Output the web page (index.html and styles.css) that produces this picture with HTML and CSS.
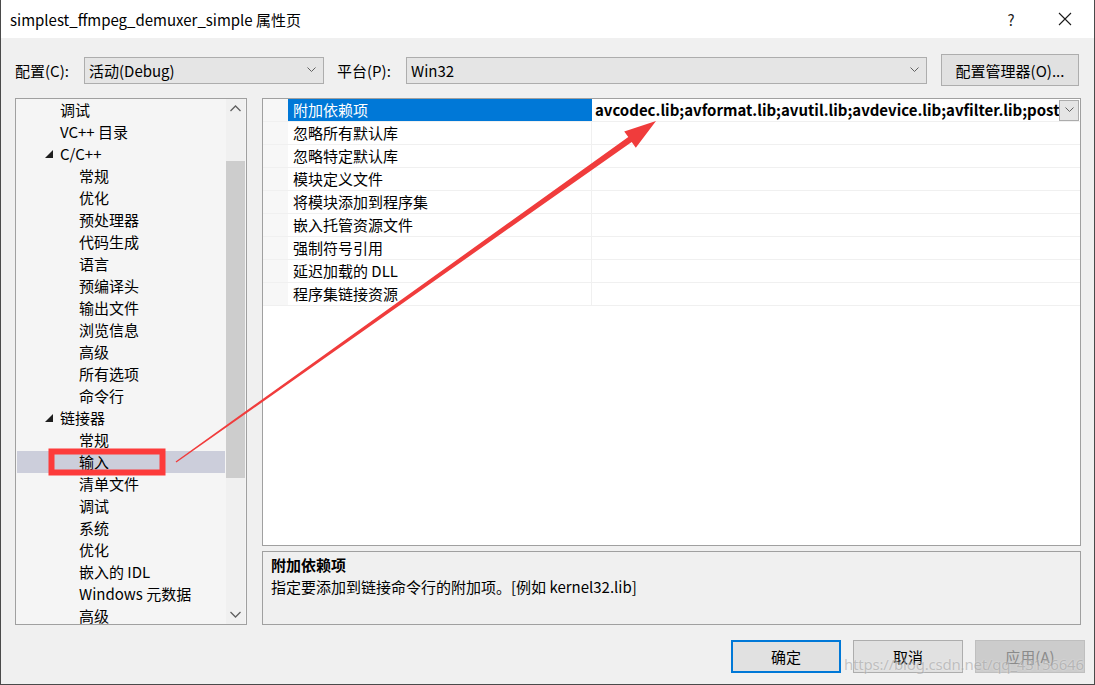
FILE: index.html
```html
<!DOCTYPE html>
<html lang="zh-CN">
<head>
  <meta charset="UTF-8">
  <title>simplest_ffmpeg_demuxer_simple 属性页</title>
  <link rel="stylesheet" href="styles.css">
</head>
<body>

<div class="window">
  <div class="titlebar">
    <span class="title">simplest_ffmpeg_demuxer_simple 属性页</span>
    <span class="help">?</span>
    <span class="close">
      <svg width="14" height="14" viewBox="0 0 14 14"><path d="M1 1 L13 13 M13 1 L1 13" stroke="#1a1a1a" stroke-width="1.1" fill="none"/></svg>
    </span>
  </div>

  <div class="config-row">
    <span class="cfg-label">配置(C):</span>
    <div class="combo combo-config">
      <span>活动(Debug)</span>
      <svg class="chev" width="9" height="6" viewBox="0 0 9 6"><path d="M0.5 0.5 L4.5 4.5 L8.5 0.5" stroke="#606060" fill="none"/></svg>
    </div>
    <span class="cfg-label">平台(P):</span>
    <div class="combo combo-platform">
      <span>Win32</span>
      <svg class="chev" width="9" height="6" viewBox="0 0 9 6"><path d="M0.5 0.5 L4.5 4.5 L8.5 0.5" stroke="#606060" fill="none"/></svg>
    </div>
    <button class="btn btn-manager">配置管理器(O)...</button>
  </div>

  <div class="main">
    <div class="tree-panel">
      <ul class="tree">
        <li class="lvl1">调试</li>
        <li class="lvl1">VC++ 目录</li>
        <li class="lvl1 open"><span class="tri"></span>C/C++</li>
        <li class="lvl2">常规</li>
        <li class="lvl2">优化</li>
        <li class="lvl2">预处理器</li>
        <li class="lvl2">代码生成</li>
        <li class="lvl2">语言</li>
        <li class="lvl2">预编译头</li>
        <li class="lvl2">输出文件</li>
        <li class="lvl2">浏览信息</li>
        <li class="lvl2">高级</li>
        <li class="lvl2">所有选项</li>
        <li class="lvl2">命令行</li>
        <li class="lvl1 open"><span class="tri"></span>链接器</li>
        <li class="lvl2">常规</li>
        <li class="lvl2 selected">输入</li>
        <li class="lvl2">清单文件</li>
        <li class="lvl2">调试</li>
        <li class="lvl2">系统</li>
        <li class="lvl2">优化</li>
        <li class="lvl2">嵌入的 IDL</li>
        <li class="lvl2">Windows 元数据</li>
        <li class="lvl2">高级</li>
      </ul>
      <div class="scrollbar">
        <div class="sb-arrow">
          <svg width="11" height="7" viewBox="0 0 11 7"><path d="M0.5 6 L5.5 1 L10.5 6" stroke="#606060" stroke-width="1.3" fill="none"/></svg>
        </div>
        <div class="sb-track"><div class="sb-thumb"></div></div>
        <div class="sb-arrow">
          <svg width="11" height="7" viewBox="0 0 11 7"><path d="M0.5 1 L5.5 6 L10.5 1" stroke="#606060" stroke-width="1.3" fill="none"/></svg>
        </div>
      </div>
    </div>

    <div class="right-col">
      <div class="grid-panel">
        <div class="prop-row active">
          <div class="gutter"></div>
          <div class="prop-name">附加依赖项</div>
          <div class="prop-value">
            <span class="value-text">avcodec.lib;avformat.lib;avutil.lib;avdevice.lib;avfilter.lib;postproc.lib;swresample.lib;swscale.lib;%(AdditionalDependencies)</span>
            <span class="drop-btn">
              <svg width="9" height="6" viewBox="0 0 9 6"><path d="M0.5 0.5 L4.5 4.5 L8.5 0.5" stroke="#606060" fill="none"/></svg>
            </span>
          </div>
        </div>
        <div class="prop-row"><div class="gutter"></div><div class="prop-name">忽略所有默认库</div><div class="prop-value"></div></div>
        <div class="prop-row"><div class="gutter"></div><div class="prop-name">忽略特定默认库</div><div class="prop-value"></div></div>
        <div class="prop-row"><div class="gutter"></div><div class="prop-name">模块定义文件</div><div class="prop-value"></div></div>
        <div class="prop-row"><div class="gutter"></div><div class="prop-name">将模块添加到程序集</div><div class="prop-value"></div></div>
        <div class="prop-row"><div class="gutter"></div><div class="prop-name">嵌入托管资源文件</div><div class="prop-value"></div></div>
        <div class="prop-row"><div class="gutter"></div><div class="prop-name">强制符号引用</div><div class="prop-value"></div></div>
        <div class="prop-row"><div class="gutter"></div><div class="prop-name">延迟加载的 DLL</div><div class="prop-value"></div></div>
        <div class="prop-row"><div class="gutter"></div><div class="prop-name">程序集链接资源</div><div class="prop-value"></div></div>
      </div>
      <div class="desc-panel">
        <div class="desc-title">附加依赖项</div>
        <div class="desc-text">指定要添加到链接命令行的附加项。[例如 kernel32.lib]</div>
      </div>
    </div>
  </div>

  <div class="button-row">
    <button class="btn btn-dialog btn-default">确定</button>
    <button class="btn btn-dialog">取消</button>
    <button class="btn btn-dialog btn-disabled">应用(A)</button>
  </div>

  <!-- screenshot annotation: red box + arrow -->
  <svg class="annotation" width="1095" height="685" viewBox="0 0 1095 685">
    <rect x="50.5" y="451.5" width="111" height="21" fill="none" stroke="#fd3b3b" stroke-width="6"/>
    <polygon fill="#f03c3c" points="175.4,462.6 174.6,461.4 627.3,137.1 623.2,131.4 655,121 634.8,147.7 630.7,141.9"/>
  </svg>

  <div class="watermark">https://blog.csdn.net/qq_43156646</div>
</div>

</body>
</html>
```

FILE: styles.css
```css
body {
  margin: 0;
  font-family: "Noto Sans CJK SC", "Noto Sans", sans-serif;
  font-size: 15px;
  color: #000;
  background: #f0f0f0;
}

.window {
  position: relative;
  width: 1095px;
  height: 685px;
  box-sizing: border-box;
  background: #f0f0f0;
  border: 1px solid #4a4a4a;
  border-top: none;
  overflow: hidden;
}

.titlebar {
  height: 38px;
  background: #fff;
  display: flex;
  align-items: center;
  padding-left: 9px;
}

.title {
  flex: 1;
  font-size: 15px;
}

.help {
  width: 20px;
  text-align: center;
  font-size: 15px;
  margin-right: 37px;
  color: #222;
}

.close {
  display: flex;
  margin-right: 22px;
}

.config-row {
  display: flex;
  align-items: center;
  padding: 16px 0 0 14px;
  height: 32px;
}

.cfg-label {
  width: 69px;
}

.combo {
  height: 27px;
  box-sizing: border-box;
  border: 1px solid #adadad;
  background: #e5e5e5;
  display: flex;
  align-items: center;
  justify-content: space-between;
  padding: 0 7px 0 4px;
}

.combo-config {
  width: 240px;
  margin-right: 13px;
}

.combo-platform {
  width: 521px;
  margin-right: 14px;
}

.btn {
  font-family: inherit;
  font-size: 15px;
  color: #000;
  background: #e1e1e1;
  border: 1px solid #adadad;
  box-sizing: border-box;
  padding: 0;
}

.btn-manager {
  width: 138px;
  height: 32px;
}

.main {
  display: flex;
  gap: 15px;
  margin-top: 12px;
  padding-left: 14px;
  height: 527px;
}

.tree-panel {
  width: 232px;
  box-sizing: border-box;
  border: 1px solid #a0a0a0;
  background: #f5f5f5;
  display: flex;
  overflow: hidden;
}

.tree {
  list-style: none;
  margin: 0;
  padding: 0 1px;
  flex: 1;
  overflow: hidden;
}

.tree li {
  height: 22px;
  line-height: 22px;
  white-space: nowrap;
  position: relative;
}

.lvl1 {
  padding-left: 43px;
}

.lvl2 {
  padding-left: 62px;
}

.tree .selected {
  background: #cccedb;
}

.tri {
  position: absolute;
  left: 28px;
  top: 7px;
  width: 0;
  height: 0;
  border-left: 8px solid transparent;
  border-bottom: 8px solid #1e1e1e;
}

.scrollbar {
  width: 19px;
  margin-right: 1px;
  display: flex;
  flex-direction: column;
  background: #f0f0f0;
}

.sb-arrow {
  height: 19px;
  display: flex;
  align-items: center;
  justify-content: center;
}

.sb-track {
  flex: 1;
}

.sb-thumb {
  margin-top: 43px;
  height: 317px;
  background: #cdcdcd;
}

.right-col {
  display: flex;
  flex-direction: column;
  gap: 5px;
  width: 819px;
}

.grid-panel {
  height: 448px;
  box-sizing: border-box;
  border: 1px solid #a0a0a0;
  background: #fff;
}

.prop-row {
  display: flex;
  height: 23px;
  box-sizing: border-box;
  border-bottom: 1px solid #f0f0f0;
}

.gutter {
  width: 25px;
  background: #f7f7f7;
}

.prop-name {
  width: 304px;
  padding-left: 5px;
  box-sizing: border-box;
  line-height: 22px;
  border-right: 1px solid #f0f0f0;
  white-space: nowrap;
}

.prop-value {
  flex: 1;
  display: flex;
  align-items: center;
  min-width: 0;
  padding-left: 3px;
}

.active .prop-name {
  background: #0078d7;
  color: #fff;
  border-right-color: #0078d7;
}

.value-text {
  flex: 1;
  font-weight: bold;
  white-space: nowrap;
  overflow: hidden;
  line-height: 22px;
}

.drop-btn {
  width: 20px;
  height: 21px;
  box-sizing: border-box;
  border: 1px solid #acacac;
  background: #e5e5e5;
  display: flex;
  align-items: center;
  justify-content: center;
  margin-right: 1px;
}

.desc-panel {
  height: 74px;
  box-sizing: border-box;
  border: 1px solid #a0a0a0;
  padding: 2px 8px;
  line-height: 22px;
}

.desc-title {
  font-weight: bold;
}

.button-row {
  display: flex;
  justify-content: flex-end;
  gap: 12px;
  margin-top: 15px;
  padding-right: 9px;
}

.btn-dialog {
  width: 110px;
  height: 33px;
}

.btn-default {
  border: 2px solid #0078d7;
}

.btn-disabled {
  background: #cccccc;
  border-color: #bfbfbf;
  color: #8a8a8a;
}

.annotation {
  position: absolute;
  left: 0;
  top: 0;
  pointer-events: none;
}

.watermark {
  position: absolute;
  left: 843px;
  top: 654px;
  font-family: "Noto Sans", sans-serif;
  font-size: 15px;
  letter-spacing: -0.2px;
  color: #a8a8a8;
  text-shadow: 0 0 2px #fff;
  opacity: 0.6;
  pointer-events: none;
  white-space: nowrap;
}
```
